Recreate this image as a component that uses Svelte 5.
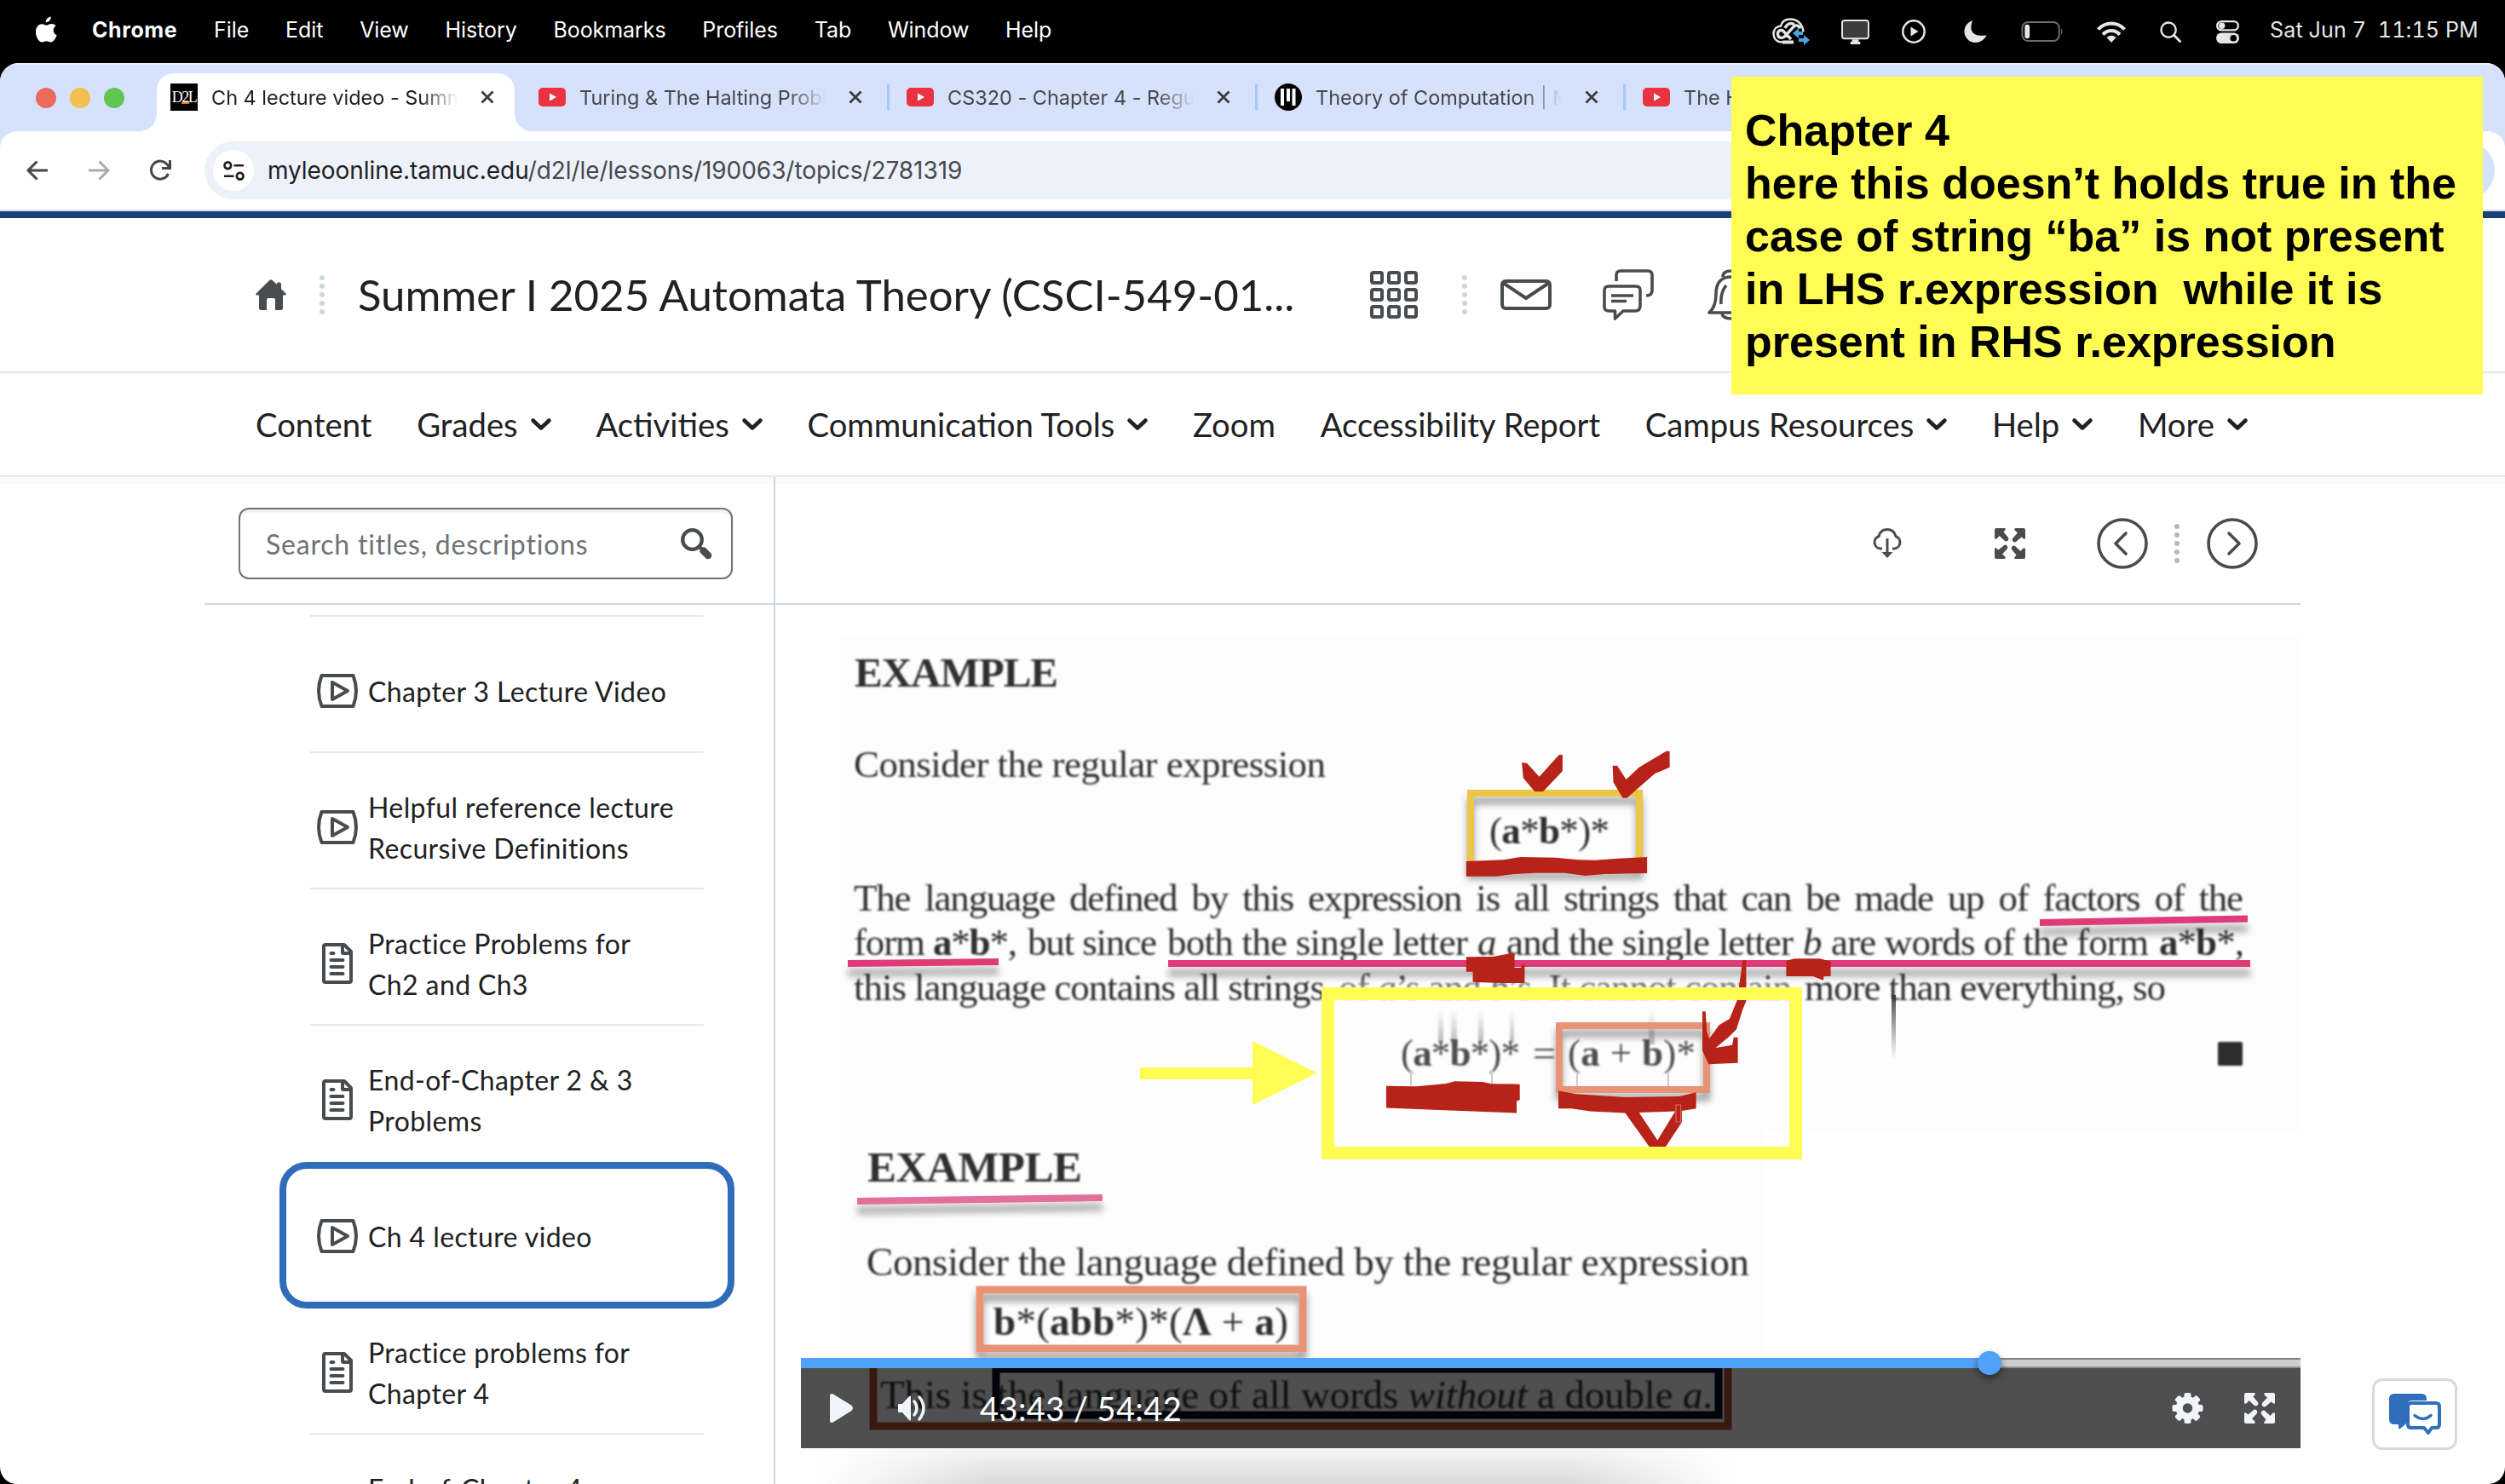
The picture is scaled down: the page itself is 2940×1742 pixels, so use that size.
<script>
  const menus = ['File', 'Edit', 'View', 'History', 'Bookmarks', 'Profiles', 'Tab', 'Window', 'Help'];
  const tabs = [
    { icon: 'd2l', title: 'Ch 4 lecture video - Summer I', active: true },
    { icon: 'yt', title: 'Turing & The Halting Problem' },
    { icon: 'yt', title: 'CS320 - Chapter 4 - Regular', sep: true },
    { icon: 'mit', title: 'Theory of Computation | Math', sep: true },
    { icon: 'yt', title: 'The Halting Problem', sep: true }
  ];
  const nav = [
    { label: 'Content' },
    { label: 'Grades', drop: true },
    { label: 'Activities', drop: true },
    { label: 'Communication Tools', drop: true },
    { label: 'Zoom' },
    { label: 'Accessibility Report' },
    { label: 'Campus Resources', drop: true },
    { label: 'Help', drop: true },
    { label: 'More', drop: true }
  ];
  const topics = [
    { kind: 'video', lines: ['Chapter 3 Lecture Video'] },
    { kind: 'video', lines: ['Helpful reference lecture', 'Recursive Definitions'] },
    { kind: 'doc', lines: ['Practice Problems for', 'Ch2 and Ch3'] },
    { kind: 'doc', lines: ['End-of-Chapter 2 & 3', 'Problems'] },
    { kind: 'video', lines: ['Ch 4 lecture video'], active: true },
    { kind: 'doc', lines: ['Practice problems for', 'Chapter 4'] },
    { kind: 'doc', lines: ['End-of-Chapter 4', 'Problems'] }
  ];
  const dots = [0, 1, 2, 3, 4];
  const cells = [0, 1, 2];
  const teeth = [0, 45, 90, 135, 180, 225, 270, 315];
</script>

{#snippet dotted()}
  <svg class="dots" viewBox="0 0 6 48">
    {#each dots as d}<circle cx="3" cy={4 + d * 10} r="3" />{/each}
  </svg>
{/snippet}

{#snippet expand()}
  <svg class="expand" viewBox="0 0 36 36">
    <path d="M2 0h9.500q2 0 1 2l-2 2.500 5.500 6.500q1 2-.5 3.500t-3.500.5L5.500 9 3 12Q0 14 0 11V2Q0 0 2 0Z" />
    <path transform="rotate(90 18 18)" d="M2 0h9.500q2 0 1 2l-2 2.500 5.500 6.500q1 2-.5 3.500t-3.500.5L5.500 9 3 12Q0 14 0 11V2Q0 0 2 0Z" />
    <path transform="rotate(180 18 18)" d="M2 0h9.500q2 0 1 2l-2 2.500 5.500 6.500q1 2-.5 3.500t-3.500.5L5.500 9 3 12Q0 14 0 11V2Q0 0 2 0Z" />
    <path transform="rotate(270 18 18)" d="M2 0h9.500q2 0 1 2l-2 2.500 5.500 6.500q1 2-.5 3.500t-3.500.5L5.500 9 3 12Q0 14 0 11V2Q0 0 2 0Z" />
  </svg>
{/snippet}

<div class="desktop">
  <header class="menubar">
    <svg class="apple" viewBox="0 0 28 32">
      <path fill="#fff" d="M19.500 0c.3 3.800-2.900 7.200-6.300 7C12.800 3.500 16.300.3 19.500 0ZM25.500 11c-4.500 3-3.800 9.500 1.200 11.500C25 27 22.300 31 19.300 31c-2.200 0-2.900-1.300-5.400-1.300S10.500 31 8.500 31C4.800 31 1 24.500 1 18.500 1 12.500 4.700 9 8.500 9c2.400 0 4.100 1.500 5.600 1.500S17.500 8.800 20.300 8.800c1.900 0 4 .9 5.200 2.200Z" />
    </svg>
    <nav class="menus">
      <b>Chrome</b>
      {#each menus as m}<span>{m}</span>{/each}
    </nav>
    <div class="status">
      <svg class="s-cc" viewBox="0 0 44 32">
        <path d="M12 28.500C4.500 28.500 1.500 23.500 1.500 18.500S5 10 10 9.500C11.500 4 16 1.500 21 1.500c8 0 14.500 5 15.500 15" fill="none" stroke="#e6e6e6" stroke-width="2.500" />
        <path d="M12 28.500h13" fill="none" stroke="#e6e6e6" stroke-width="4" />
        <path d="M22 25L13 15.500c-3-2.500-7 0-6.500 4s5 5 8 2.500L25 10.500c2.500-3 7-1.500 7.500 2M15 12c2-5 7-7 11-4" fill="none" stroke="#e6e6e6" stroke-width="3.400" />
        <path d="M24 18l7-6v4h5v4h-5v4zM44 26l-7-6v4h-6v4h6v4z" fill="#47a5e5" />
      </svg>
      <svg class="s-mon" viewBox="0 0 34 30">
        <rect x="1" y="1" width="32" height="22" rx="3" fill="#3c3c3c" stroke="#e6e6e6" stroke-width="2" />
        <path d="M13 24h8v3h2v3H11v-3h2z" fill="#e6e6e6" />
      </svg>
      <svg class="s-play" viewBox="0 0 28 28">
        <circle cx="14" cy="14" r="12.700" fill="none" stroke="#e6e6e6" stroke-width="2.500" />
        <path d="M10.500 8.500v11l9-5.500z" fill="#e6e6e6" />
      </svg>
      <svg class="s-moon" viewBox="0 0 28 28"><path d="M10.500.5C5 15 13 21 27.500 18.500 25 24 20 27.500 14.500 27.500 6 27.500.5 21 .5 14 .5 8 4.500 2.500 10.500.5Z" fill="#e6e6e6" /></svg>
      <svg class="s-bat" viewBox="0 0 52 26">
        <rect x="1" y="1" width="45" height="23" rx="7" fill="none" stroke="#6e6e6e" stroke-width="2" />
        <rect x="4" y="4" width="6" height="17" rx="3" fill="#e6e6e6" />
        <path d="M48.500 8.500q3 4 0 8z" fill="#6e6e6e" />
      </svg>
      <svg class="s-wifi" viewBox="0 0 34 25">
        <g fill="none" stroke="#e6e6e6" stroke-width="4"><path d="M1.500 9.500C10 0 24 0 32.500 9.500" /><path d="M7 15.500c6-6 14-6 20 0" /></g>
        <path d="M11.500 19q5.500-4.500 11 0L17 25z" fill="#e6e6e6" />
      </svg>
      <svg class="s-find" viewBox="0 0 26 26"><circle cx="10.500" cy="10.500" r="9" fill="none" stroke="#e6e6e6" stroke-width="2.500" /><path d="M17 17l7.500 7.500" stroke="#e6e6e6" stroke-width="3" stroke-linecap="round" /></svg>
      <svg class="s-ctl" viewBox="0 0 28 28">
        <rect x="1.200" y="1.200" width="25.600" height="10.600" rx="5.300" fill="none" stroke="#e6e6e6" stroke-width="2.400" />
        <circle cx="7" cy="6.500" r="3.800" fill="#e6e6e6" />
        <rect y="15" width="28" height="13" rx="6.500" fill="#e6e6e6" /><circle cx="21" cy="21.500" r="4" />
      </svg>
      <time>Sat Jun 7&nbsp; 11:15 PM</time>
    </div>
  </header>

  <section class="window">
    <div class="tabstrip">
      <div class="lights"><i class="r"></i><i class="y"></i><i class="g"></i></div>
      {#each tabs as t}
        <div class="tab" class:active={t.active} class:sep={t.sep}>
          {#if t.icon === 'd2l'}
            <span class="fav-d2l">D2L</span>
          {:else if t.icon === 'yt'}
            <svg class="fav" viewBox="0 0 32 32"><rect y="5" width="32" height="22" rx="5" fill="#ea3340" /><path d="M13 11.500v9l8-4.500z" fill="#fff" /></svg>
          {:else}
            <svg class="fav" viewBox="0 0 32 32"><circle cx="16" cy="16" r="16" /><path d="M7 6h4v20H7zM14 6h4v15h-4zM20.500 6h4v20h-4z" fill="#fff" /></svg>
          {/if}
          <span class="title">{t.title}</span>
          <svg class="x" viewBox="0 0 16 16"><path d="M1.500 1.500l13 13M14.500 1.500l-13 13" /></svg>
        </div>
      {/each}
    </div>

    <div class="toolbar">
      <svg class="arrow" viewBox="0 0 26 24"><path d="M25 12H2M12.500 1.500L2 12l10.500 10.500" /></svg>
      <svg class="arrow off" viewBox="0 0 26 24"><path d="M1 12h23M13.500 1.500L24 12 13.500 22.500" /></svg>
      <svg class="reload" viewBox="0 0 26 26"><path d="M22.500 17A10.500 10.500 0 1 1 21.500 6.500L24 9.500M24.500 1v9.500H15" /></svg>
      <div class="omnibox">
        <span class="site"><svg viewBox="0 0 26 24"><g fill="none" stroke="#1f1f1f" stroke-width="2.800"><circle cx="5.500" cy="5.500" r="4" /><path d="M13 5.500h12M1 18.500h12" /><circle cx="20.500" cy="18.500" r="4" /></g></svg></span>
        <span class="url"><b>myleoonline.tamuc.edu</b>/d2l/le/lessons/190063/topics/2781319</span>
      </div>
      <span class="pill"></span>
    </div>

    <div class="brand"></div>
    <div class="course">
      <svg class="home" viewBox="0 0 36 36"><path fill="#494c4e" d="M16.500.8q1.500-1.200 3 0L25 6V5q0-1.500 1.500-1.500h1.800q1.700 0 1.700 1.700V11l5.200 5.200q1.400 1.800-.4 2.300H32v15q0 2.500-2.500 2.500H23V24q0-2-2-2h-6q-2 0-2 2v12H6.500Q4 36 4 33.500v-15H1.200Q-.6 18 .8 16.200Z" /></svg>
      {@render dotted()}
      <h1>Summer I 2025 Automata Theory (CSCI-549-01...</h1>
      <svg class="grid" viewBox="0 0 56 56">
        {#each cells as r}{#each cells as c}<rect x={2 + c * 20} y={2 + r * 20} width="12" height="12" rx="2" />{/each}{/each}
      </svg>
      {@render dotted()}
      <svg class="mail" viewBox="0 0 60 36"><rect x="2" y="2" width="56" height="32" rx="4" /><path d="M3 4l27 18L57 4" /></svg>
      <svg class="chat" viewBox="0 0 60 60">
        <path d="M16 14V7q0-5 5-5h32q5 0 5 5v18q0 6-7 6M7 20h32q5 0 5 5v18q0 6-6 6H24L14.500 58V49H7q-5 0-5-5V25q0-5 5-5ZM10 31h26M10 37.500h18" />
      </svg>
      <svg class="bell" viewBox="0 0 56 60">
        <path d="M18 9q0-7 10-7t10 7M2 51h52q-8-7-8-22Q46 9 28 9T10 29Q10 44 2 51ZM17 52q1 6 11 6t11-6M16 41q-1-14 6-22" />
      </svg>
    </div>
    <nav class="coursenav">
      {#each nav as n}
        <span>{n.label}{#if n.drop}<svg class="chev" viewBox="0 0 24 14"><path d="M2.500 2.500l9.500 9 9.500-9" /></svg>{/if}</span>
      {/each}
    </nav>

    <div class="body">
      <aside>
        <div class="searchrow">
          <div class="search">
            <span>Search titles, descriptions</span>
            <svg viewBox="0 0 37 37"><circle cx="13.500" cy="13.500" r="11.300" fill="none" stroke="#494c4e" stroke-width="4.300" /><path d="M22 22l2.500 2.500" stroke="#494c4e" stroke-width="4" /><path d="M26.500 26.500l5.500 5.500" stroke="#494c4e" stroke-width="8.500" stroke-linecap="round" /></svg>
          </div>
        </div>
        <ul>
          {#each topics as t}
            <li class:active={t.active}>
              {#if t.kind === 'video'}
                <svg class="ico" viewBox="0 0 48 48"><path d="M5.500 6h37q3.500 9 3.500 18t-3.500 18h-37Q2 33 2 24T5.500 6Z" /><path d="M18 14v20l18-10z" /></svg>
              {:else}
                <svg class="ico" viewBox="0 0 48 48"><path d="M8 4q0-2 2-2h22l8 8v34q0 2-2 2H10q-2 0-2-2ZM30 3v8q0 1 1 1h8M16.500 12h3M16.500 20h14M16.500 28h14M16.500 36h14" /></svg>
              {/if}
              <p>{#each t.lines as l}<span>{l}</span>{/each}</p>
            </li>
          {/each}
        </ul>
      </aside>

      <main>
        <div class="tools">
          <svg class="cloud" viewBox="0 0 36 36"><path d="M12 24H9.500A7.500 7.500 0 0 1 8 9.500C9.500 4 13.500 1.500 18 1.500S26.500 4 28 9.500A7.500 7.500 0 0 1 26.500 24H24M18 12v17" /><path d="M11.500 28h13L18 35z" class="fill" /></svg>
          {@render expand()}
          <svg class="round prev" viewBox="0 0 60 60"><circle cx="30" cy="30" r="28" /><path d="M34 18L22 30l12 12" /></svg>
          {@render dotted()}
          <svg class="round next" viewBox="0 0 60 60"><circle cx="30" cy="30" r="28" /><path d="M26 18l12 12-12 12" /></svg>
        </div>

        <div class="video">
          <svg class="slide" viewBox="940 710 1760 990">
            <defs>
              <filter id="soft"><feGaussianBlur stdDeviation="0.8" /></filter>
              <filter id="drop" x="-20%" y="-60%" width="140%" height="260%"><feDropShadow dx="0" dy="9" stdDeviation="4" flood-color="#000" flood-opacity=".38" /></filter>
              <filter id="lineshadow" filterUnits="userSpaceOnUse" x="940" y="710" width="1760" height="990"><feDropShadow dx="0" dy="11" stdDeviation="4" flood-color="#000" flood-opacity=".35" /></filter>
              <linearGradient id="streak" x1="0" y1="0" x2="0" y2="1"><stop offset="0" stop-color="#555" stop-opacity="0" /><stop offset="1" stop-color="#555" stop-opacity=".4" /></linearGradient>
              <linearGradient id="streakdown" x1="0" y1="0" x2="0" y2="1"><stop offset="0" stop-color="#333" stop-opacity=".9" /><stop offset="1" stop-color="#555" stop-opacity="0" /></linearGradient>
              <linearGradient id="fade" gradientUnits="userSpaceOnUse" x1="0" y1="1144" x2="0" y2="1176"><stop offset="0" stop-color="#3c3c3c" /><stop offset=".5" stop-color="#888" /><stop offset="1" stop-color="#ddd" /></linearGradient>
            </defs>
            <path d="M986 748H2700V1327H2069V1594H986Z" fill="#fdfdfd" />

            <g class="ink" filter="url(#soft)">
              <text x="1003" y="806" textLength="239" class="h">EXAMPLE</text>
              <text x="1002" y="912" textLength="554">Consider the regular expression</text>
              <text x="1748" y="990" textLength="141">(<tspan class="b">a</tspan>*<tspan class="b">b</tspan>*)*</text>
              <text x="1002" y="1069" textLength="1631" class="wide">The language defined by this expression is all strings that can be made up of factors of the</text>
              <text x="1002" y="1121" textLength="192">form <tspan class="b">a</tspan>*<tspan class="b">b</tspan>*,</text>
              <text x="1206" y="1121" textLength="152">but since</text>
              <text x="1370" y="1121" textLength="353">both the single letter</text>
              <text x="1734" y="1121" class="i">a</text>
              <text x="1768" y="1121" textLength="337">and the single letter</text>
              <text x="2116" y="1121" class="i">b</text>
              <text x="2149" y="1121" textLength="373">are words of the form</text>
              <text x="2534" y="1121" textLength="100"><tspan class="b">a</tspan>*<tspan class="b">b</tspan>*,</text>
              <text x="1002" y="1174" textLength="553">this language contains all strings</text>
              <text x="1571" y="1174" textLength="532" fill="url(#fade)">of <tspan class="i">a</tspan>’s and <tspan class="i">b</tspan>’s. It cannot contain</text>
              <text x="2118" y="1174" textLength="424">more than everything, so</text>
              <text x="1644" y="1251" textLength="140" class="pale">(<tspan class="b">a</tspan>*<tspan class="b">b</tspan>*)*</text>
              <text x="1799" y="1251" textLength="27" lengthAdjust="spacingAndGlyphs" class="pale">=</text>
              <text x="1840" y="1251" textLength="150" class="pale">(<tspan class="b">a</tspan> + <tspan class="b">b</tspan>)*</text>
              <text x="1018" y="1387" textLength="252" class="h big">EXAMPLE</text>
              <text x="1017" y="1497" textLength="1036" class="large">Consider the language defined by the regular expression</text>
              <text x="1166" y="1567" textLength="346" class="large"><tspan class="b">b</tspan>*(<tspan class="b">abb</tspan>*)*(<tspan class="b">Λ</tspan> + <tspan class="b">a</tspan>)</text>
              <text x="1033" y="1653" textLength="977" class="large">This is the language of all words <tspan class="i">without</tspan> a double <tspan class="i">a</tspan>.</text>
              <rect x="2603" y="1223" width="29" height="28" rx="2" />
            </g>
            <rect x="2220" y="1168" width="5" height="76" fill="url(#streakdown)" />
            <g fill="url(#streak)" filter="url(#soft)">
              <rect x="1688" y="1186" width="6" height="38" /><rect x="1703" y="1186" width="7" height="40" /><rect x="1735" y="1186" width="6" height="38" /><rect x="1772" y="1186" width="5" height="38" /><rect x="1935" y="1186" width="7" height="40" />
            </g>
            <path d="M1656 1256v18M1751 1256v18M1851 1258v18M1958 1258v18" stroke="#ccc" stroke-width="2" />

            <g filter="url(#lineshadow)" fill="none" stroke="#e03b79" stroke-width="8">
              <path d="M995 1131L1172 1129M1371 1131H2641M2394 1083L2638 1078.500" />
              <path d="M1006 1410L1294 1406" stroke="#e36f9c" />
            </g>
            <rect x="1726" y="931" width="198" height="88" fill="none" stroke="#eec645" stroke-width="8" filter="url(#drop)" />
            <rect x="1830" y="1204" width="173" height="75" fill="none" stroke="#e99376" stroke-width="8" filter="url(#drop)" />
            <rect x="1150" y="1514" width="379" height="69" fill="none" stroke="#e99376" stroke-width="9" filter="url(#drop)" />
            <rect x="1025" y="1601" width="1003" height="73" fill="none" stroke="#b85230" stroke-width="9" />
            <rect x="1169" y="1607" width="848" height="54" fill="none" stroke="#080d28" stroke-width="9" />

            <g fill="#b72318" transform="translate(1540 860) scale(.4082 .3333)">
              <path d="M603 105L618 108 653 155 710 78H720V135L664 208H640L607 160Z" />
              <path d="M864 116H877L903 165 940 122 1018 65H1028V122L985 145 905 230H893L866 175Z" />
              <path d="M443 453L550 448 600 438 700 440 765 448 815 449 880 443 963 438V495L840 498 785 504 727 494 640 494 575 499 530 506H443Z" />
              <path d="M443 790L520 789 575 776 582 780V828L600 828 604 817H611V882H545L462 878V842H443Z" />
              <path d="M1363 803L1388 796H1460L1491 806V858H1471L1470 872 1440 858H1363Z" />
              <path d="M1238 802H1248V945L1238 975 1220 1045 1195 1075 1160 1110 1208 1100 1212 1073H1224V1163L1140 1168 1122 1120V982H1131L1135 1055 1142 1078 1170 1030 1200 1008 1222 942Z" />
              <path d="M213 1244L300 1246 385 1236 410 1228 490 1230 515 1237 597 1238V1294L588 1298V1340L335 1328 213 1322Z" />
              <path d="M708 1262L760 1273 900 1284 1055 1281 1104 1267V1324L1063 1332V1372L1016 1460H970L900 1340 800 1334 745 1324H708ZM940 1338L993 1436 1044 1334Z" fill-rule="evenodd" />
              <rect x="1046" y="1311" width="14" height="60" fill="none" stroke="#e08a80" stroke-width="2" />
            </g>
          </svg>
          <div class="controls">
            <div class="track"><div class="played"></div></div>
            <div class="buttons">
              <svg class="play" viewBox="0 0 28 36"><path d="M0 3Q0-1 4 1l22 13.500q4 3.500 0 7L4 35q-4 2-4-2Z" /></svg>
              <svg class="vol" viewBox="0 0 34 34"><path d="M1 12h4l8-9q2-1.500 2 1v26q0 2.500-2 1l-8-9H1q-1 0-1-1v-8q0-1 1-1Z" /><path d="M19 9q6 8 0 16M25 4q10 13 0 26" fill="none" stroke="#f1f4fb" stroke-width="3.500" stroke-linecap="round" /></svg>
              <span class="clock">43:43 / 54:42</span>
              <svg class="gear" viewBox="-18 -18 36 36"><circle r="9.800" fill="none" stroke="#f1f4fb" stroke-width="8" />{#each teeth as a}<rect x="-4" y="-18" width="8" height="8" rx="2" transform="rotate({a})" />{/each}</svg>
              {@render expand()}
            </div>
          </div>
        </div>
        <div class="glow"></div>
      </main>
    </div>
  </section>

  <div class="frame"></div>
  <svg class="pointer" viewBox="0 0 208 76"><path d="M0 31H132V0L208 37.500 132 75V45H0Z" fill="#fffc54" /></svg>
  <div class="note"><p>Chapter 4</p><p>here this doesn’t holds true in the</p><p>case of string “ba” is not present</p><p>in LHS r.expression&nbsp; while it is</p><p>present in RHS r.expression</p></div>
  <div class="helper">
    <svg viewBox="0 0 61 49">
      <path fill="#2f6fbc" d="M6 0h32q6 0 6 6v2H27q-6 0-6 6v18q0 2-2 4l-6 5q-2 1-2-1v-4H6q-6 0-6-6V6Q0 0 6 0Z" />
      <path fill="none" stroke="#2f6fbc" stroke-width="4" stroke-linejoin="round" d="M26 11h29q4 0 4 4v21q0 4-4 4h-5l-4 6-5-6H26q-4 0-4-4V15q0-4 4-4Z" />
      <path fill="none" stroke="#2f6fbc" stroke-width="3.500" stroke-linecap="round" d="M30 25.500q10 8 19 0" />
    </svg>
  </div>
</div>

<style>
  :global(body) { margin: 0; background: #000; }
  .desktop { position: relative; width: 2940px; height: 1742px; overflow: hidden; background: #000; font-family: Lato, 'Liberation Sans', sans-serif; color: #202122; }
  svg { display: block; flex: none; overflow: visible; }

  .menubar { height: 74px; box-sizing: border-box; padding: 0 34px 0 41px; display: flex; align-items: center; color: #fff; font: 25px/70px Inter, sans-serif; }
  .apple { width: 27px; height: 32px; margin-right: 40px; margin-bottom: 4px; }
  .menus { display: flex; gap: 42.800px; height: 70px; letter-spacing: -.07px; margin-bottom: 4px; }
  .menus b { letter-spacing: .6px; }
  .status { margin-left: auto; display: flex; align-items: center; color: #e6e6e6; }
  .s-cc { width: 44px; height: 32px; margin-right: 37px; }
  .s-mon { width: 33px; height: 29px; margin-right: 38px; }
  .s-play { width: 28px; height: 28px; margin-right: 45px; }
  .s-moon { width: 27px; height: 28px; margin-right: 40px; }
  .s-bat { width: 51px; height: 25px; margin-right: 38px; }
  .s-wifi { width: 34px; height: 25px; margin-right: 40px; }
  .s-find { width: 25px; height: 25px; margin-right: 41px; }
  .s-ctl { width: 27px; height: 27px; margin-right: 36px; }
  time { width: 242px; margin-bottom: 4px; white-space: nowrap; letter-spacing: .15px; font-feature-settings: 'tnum'; }

  .window { height: 1668px; border-radius: 22px 22px 20px 20px; overflow: hidden; background: #fff; }
  .tabstrip { height: 80px; background: #d6e1fb; display: flex; padding-top: 12px; box-sizing: border-box; box-shadow: inset 0 2px #e9effc; }
  .lights { display: flex; gap: 16px; padding: 17px 38px 0 42px; }
  .lights i { width: 24px; height: 24px; border-radius: 50%; }
  .r { background: #ec695e; } .y { background: #f4be50; } .g { background: #61c554; }
  .tab { position: relative; width: 432px; flex: none; box-sizing: border-box; display: flex; align-items: center; height: 68px; padding: 0 36px 12px 16px; font: 23.500px Inter, sans-serif; color: #45474a; }
  .tab.active { color: #1f1f1f; }
  .tab.active::before { content: ''; position: absolute; z-index: 0; left: 0; top: 0; width: 420px; height: 68px; border-radius: 20px 20px 0 0; background: #fff; }
  .tab.active::after { content: ''; position: absolute; left: -20px; right: -8px; bottom: 0; height: 20px; background: radial-gradient(circle at 0 0, transparent 19.500px, #fff 20px) left/20px 20px no-repeat, radial-gradient(circle at 100% 0, transparent 19.500px, #fff 20px) right/20px 20px no-repeat; }
  .tab > * { position: relative; }
  .sep::before { content: ''; position: absolute; left: -7px; top: 12px; width: 3px; height: 32px; border-radius: 2px; background: #a8c7fa; }
  .fav { width: 32px; height: 32px; }
  .fav-d2l { width: 32px; height: 32px; background: linear-gradient(#e87511, #e87511) 13px 22px/9px 2px no-repeat #000; color: #fff; font: 18px/32px 'Liberation Serif', serif; letter-spacing: -1.500px; text-align: center; }
  .title { width: 292px; margin: 0 23px 0 16px; overflow: hidden; white-space: nowrap; letter-spacing: -.02px; -webkit-mask-image: linear-gradient(90deg, #000 84%, transparent 99%); mask-image: linear-gradient(90deg, #000 84%, transparent 99%); }
  .x { width: 16px; height: 16px; margin-left: 1px; fill: none; stroke: #3a3a3a; stroke-width: 2.800; }

  .toolbar { height: 92px; display: flex; align-items: center; background: #fff; border-bottom: 2px solid #dfe1e4; padding: 0 12px 0 31px; box-sizing: content-box; border-radius: 20px 20px 0 0; box-shadow: 0 -20px 0 -0px #d6e1fb; }
  .arrow { width: 26px; height: 24px; margin-right: 46px; fill: none; stroke: #45474a; stroke-width: 3; }
  .off { stroke: #a9abad; }
  .reload { width: 26px; height: 26px; margin-right: 39px; fill: none; stroke: #45474a; stroke-width: 3; }
  .omnibox { width: 2560px; height: 68px; border-radius: 34px; background: #edf1f9; display: flex; align-items: center; }
  .site { width: 48px; height: 48px; margin: 0 16px 0 10px; border-radius: 50%; background: #fff; display: grid; place-items: center; }
  .site svg { width: 25px; height: 23px; }
  .url { font: 28px Inter, sans-serif; letter-spacing: -.06px; color: #46494d; white-space: nowrap; }
  .url b { font-weight: 400; color: #1f1f1f; }
  .pill { width: 100px; height: 68px; margin-left: auto; border-radius: 34px; background: #d6e2fb; }

  .brand { height: 8px; background: #19427a; }
  .course { height: 180px; border-bottom: 2px solid #e6e7ed; display: flex; align-items: center; padding-left: 300px; }
  .home { width: 36px; height: 36px; margin-right: 39px; }
  .dots { width: 6px; height: 48px; fill: #cdd5dc; }
  h1 { margin: 0 0 0 39px; width: 1150px; font-weight: 400; font-size: 50.950px; line-height: 60px; white-space: nowrap; }
  .course h1 { flex: none; margin-right: 38px; }
  .grid, .mail, .chat, .bell { fill: none; stroke: #494c4e; stroke-width: 4; stroke-linejoin: round; }
  .grid { width: 56px; height: 56px; margin-right: 52px; }
  .mail { width: 60px; height: 36px; margin: 0 60px 0 39px; }
  .chat { width: 60px; height: 60px; margin-right: 63px; stroke-width: 3.600; }
  .bell { width: 56px; height: 60px; stroke-width: 3.600; }
  .coursenav { height: 120px; border-bottom: 2px solid #e6e7ed; box-shadow: 0 8px #fafafa; position: relative; display: flex; align-items: center; gap: 52.700px; padding-left: 300px; font-size: 38.250px; white-space: nowrap; }
  .coursenav span { display: flex; align-items: center; }
  .chev { width: 24px; height: 14px; margin-left: 15px; fill: none; stroke: #202122; stroke-width: 4.500; stroke-linecap: round; stroke-linejoin: round; }

  .body { position: relative; display: flex; height: 1182px; padding-left: 240px; }
  aside { width: 668px; border-right: 2px solid #cdd5dc; overflow: hidden; }
  .searchrow { height: 150px; border-bottom: 2px solid #cdd5dc; padding: 36px 48px 0 40px; box-sizing: border-box; }
  .search { height: 84px; box-sizing: border-box; border: 2px solid #6e7376; border-radius: 12px; box-shadow: inset 0 4px #f1f2f3; display: flex; align-items: center; justify-content: space-between; padding: 0 22px 0 30px; font-size: 32px; color: #6e7376; }
  .search span { letter-spacing: .8px; white-space: nowrap; }
  .search svg { width: 37px; height: 37px; }
  ul { list-style: none; margin: 12px 82px 0 124px; padding: 0; }
  li { position: relative; height: 160px; box-sizing: border-box; border-top: 2px solid #e3e9f1; display: flex; align-items: center; padding: 18px 0 0 8px; }
  .ico { width: 48px; height: 48px; margin: -3px 12px 0 0; fill: none; stroke: #494c4e; stroke-width: 4; stroke-linejoin: round; stroke-linecap: round; }
  li p { margin: 0; font-size: 32px; line-height: 48px; letter-spacing: .4px; white-space: nowrap; }
  li p span { display: block; }
  li.active { border-color: transparent; }
  li.active::before { content: ''; position: absolute; left: -36px; right: -36px; top: 0; height: 156px; border: 8px solid #2f6dba; border-radius: 32px; }
  li.active + li { border-color: transparent; }

  main { width: 1790px; position: relative; }
  .tools { width: 1790px; height: 150px; box-sizing: border-box; border-bottom: 2px solid #cdd5dc; display: flex; align-items: center; padding: 8px 0 0 1287px; }
  .tools svg { flex: none; }
  .cloud { width: 36px; height: 36px; margin-right: 108px; fill: none; stroke: #494c4e; stroke-width: 3; }
  .cloud .fill { fill: #494c4e; stroke: none; }
  .expand { width: 36px; height: 36px; fill: #494c4e; }
  .tools .expand { margin-right: 84px; }
  .round { width: 60px; height: 60px; fill: none; stroke: #494c4e; stroke-width: 3.600; stroke-linecap: round; stroke-linejoin: round; }
  .tools .dots { margin: 0 32px 0 31px; fill: #b1b9be; }
  .video { position: relative; margin-left: 30px; width: 1760px; height: 990px; overflow: hidden; }
  .slide { width: 1760px; height: 990px; }
  .ink { font: 45px 'Liberation Serif', serif; fill: #2e2e2e; }
  .h { font-weight: 700; font-size: 49px; }
  .big { font-size: 51px; }
  .large { font-size: 47px; }
  .b { font-weight: 700; }
  .i { font-style: italic; }
  .wide { word-spacing: 7px; }
  .pale { fill: #4d4d4d; }
  .controls { position: absolute; left: 0; right: 0; bottom: 0; height: 106px; display: flex; flex-direction: column; }
  .track { height: 12px; box-sizing: border-box; background: #ccd0d3; box-shadow: inset 0 2px #7b8084, inset 0 -2px #8c9195; position: relative; z-index: 1; }
  .played { position: relative; width: 1395px; height: 12px; background: #50a1f8; }
  .played::after { content: ''; position: absolute; right: -14px; top: -8px; width: 28px; height: 28px; border-radius: 50%; background: #50a1f8; box-shadow: 0 4px 8px rgba(0, 0, 0, .5); }
  .buttons { flex: 1; background: rgba(0, 0, 0, .69); display: flex; align-items: center; padding: 0 30px 0 34px; }
  .buttons svg { fill: #f1f4fb; }
  .play { width: 27px; height: 36px; margin-right: 53px; }
  .vol { width: 34px; height: 34px; margin-right: 62px; }
  .clock { color: #fff; font-size: 38px; letter-spacing: .4px; }
  .gear { width: 37px; height: 36px; margin: 0 48px 0 auto; }
  .glow { position: absolute; left: 50px; top: 1140px; width: 1080px; height: 42px; background: linear-gradient(rgba(0, 0, 0, .04), rgba(0, 0, 0, .14)); -webkit-mask-image: linear-gradient(90deg, transparent, #000 18%, #000 82%, transparent); mask-image: linear-gradient(90deg, transparent, #000 18%, #000 82%, transparent); }

  .frame { position: absolute; left: 1551px; top: 1159px; width: 534px; height: 172px; border: 15px solid #fffc54; }
  .pointer { position: absolute; left: 1338px; top: 1222px; width: 208px; height: 76px; }
  .note { position: absolute; left: 2032px; top: 90px; width: 882px; height: 373px; box-sizing: border-box; padding: 32px 0 0 16px; background: #fffc54; color: #000; font: 700 52px/62px 'Liberation Sans', sans-serif; white-space: nowrap; }
  .note p { margin: 0; }
  .helper { position: absolute; left: 2784px; top: 1618px; width: 94px; height: 78px; border: 3px solid #d5dbe0; border-radius: 12px; background: #fff; display: grid; place-items: center; }
  .helper svg { width: 61px; height: 49px; }
</style>
